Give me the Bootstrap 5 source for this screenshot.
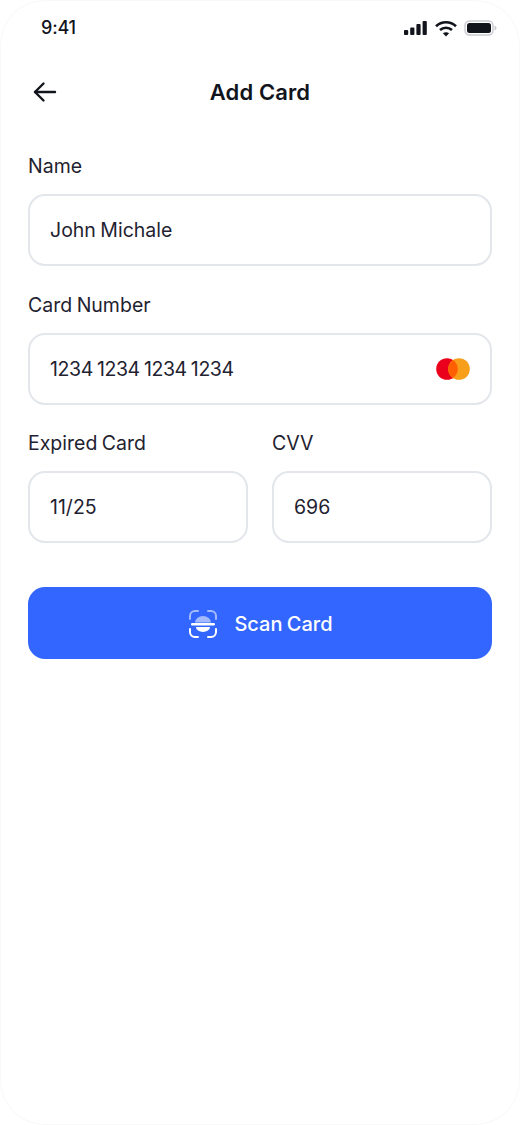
<!DOCTYPE html>
<html lang="en">
<head>
<meta charset="utf-8">
<title>Add Card</title>
<link rel="stylesheet" href="https://cdn.jsdelivr.net/npm/bootstrap@5.3.0/dist/css/bootstrap.min.css">
<style>
html,body{height:100%;background:#fff;}
body{font-family:Inter,"Liberation Sans",sans-serif;color:#1f2230;overflow:hidden;}
.phone-shell{width:520px;height:1125px;border:1px solid #f8f8f8;border-radius:45px;padding:0 27px;background:#fff;}
.status-row{height:54px;padding:0 0 0 13px;margin-right:-5px;}
.status-icons{gap:7px;}
.clock{font-size:18px;font-weight:500;line-height:1;letter-spacing:-.2px;color:#12141c;}
.top-row{height:73px;}
.back-slot{width:34px;margin-left:5px;}
.page-name{font-size:22px;font-weight:600;line-height:1;letter-spacing:.1px;color:#12141c;}
.form-area{padding-top:26px;}
.field-name{font-size:19.5px;font-weight:400;line-height:24px;margin:0 0 16px;word-spacing:-1px;}
.field-box.form-control{height:72px;border:2px solid #e3e6ea;border-radius:17px;padding:2px 20px 0 20px;font-size:19.5px;line-height:1;color:#1f2230;display:flex;align-items:center;justify-content:space-between;word-spacing:-1px;}
.digits{letter-spacing:-.4px;word-spacing:-1px;}
.field-gap-wide{margin-bottom:27px;}
.field-gap-narrow{margin-bottom:26px;}
.scan-btn.btn{height:72px;border:0;border-radius:17px;background:#3366ff;color:#fff;font-size:20px;font-weight:500;margin-top:44px;padding:1px 0 0 1px;word-spacing:-1px;}
.two-col{--bs-gutter-x:24px;}
</style>
</head>
<body>
<div class="phone-shell">
  <div class="status-row d-flex align-items-center justify-content-between">
    <span class="clock">9:41</span>
    <span class="status-icons d-flex align-items-center">
      <svg width="24" height="16" viewBox="0 0 24 16"><rect x="0" y="10" width="4.2" height="5" rx="1" fill="#12141c"/><rect x="6.2" y="7.5" width="4.2" height="7.5" rx="1" fill="#12141c"/><rect x="12.4" y="4" width="4.2" height="11" rx="1" fill="#12141c"/><rect x="18.6" y="1" width="4.2" height="14" rx="1" fill="#12141c"/></svg>
      <svg width="22" height="17" viewBox="0 0 22 17" fill="none" stroke="#12141c" stroke-width="2.6"><path d="M1 6.2C6.6 1 15.4 1 21 6.2"/><path d="M5 10C8.4 7 13.6 7 17 10"/><path d="M11 16.5 7.9 13.2C9.7 11.8 12.3 11.8 14.1 13.2Z" fill="#12141c" stroke="none"/></svg>
      <svg width="33" height="16" viewBox="0 0 33 16"><rect x="1" y="1" width="28" height="14" rx="4.5" fill="none" stroke="#c9cad0" stroke-width="1.4"/><rect x="3" y="3" width="24" height="10" rx="2.5" fill="#12141c"/><path d="M30.5 5.5c1.2.4 2 1.3 2 2.5s-.8 2.1-2 2.5Z" fill="#c9cad0"/></svg>
    </span>
  </div>
  <div class="top-row d-flex align-items-center">
    <span class="back-slot d-flex">
      <svg width="24" height="22" viewBox="0 0 24 22" fill="none" stroke="#12141c" stroke-width="2.4" stroke-linecap="round" stroke-linejoin="round"><path d="M22 11H2"/><path d="M10.5 2.5 2 11l8.5 8.500"/></svg>
    </span>
    <span class="page-name flex-grow-1 text-center">Add Card</span>
    <span class="back-slot"></span>
  </div>
  <div class="form-area">
    <p class="field-name">Name</p>
    <div class="field-box form-control field-gap-wide">John Michale</div>
    <p class="field-name">Card Number</p>
    <div class="field-box form-control field-gap-narrow">
      <span class="digits">1234 1234 1234 1234</span>
      <svg width="34" height="24" viewBox="0 0 34 24"><circle cx="11" cy="11" r="10.8" fill="#eb001b"/><circle cx="23" cy="11" r="10.8" fill="#f79e1b"/><path d="M17 2a10.8 10.8 0 0 1 0 18 10.8 10.8 0 0 1 0-18Z" fill="#ff5f00"/></svg>
    </div>
    <div class="row two-col">
      <div class="col-6">
        <p class="field-name">Expired Card</p>
        <div class="field-box form-control">11/25</div>
      </div>
      <div class="col-6">
        <p class="field-name">CVV</p>
        <div class="field-box form-control">696</div>
      </div>
    </div>
    <button type="button" class="scan-btn btn w-100 d-flex align-items-center justify-content-center gap-3">
      <svg width="30" height="30" viewBox="0 0 30 30" fill="none" stroke-linecap="round"><g stroke="#fff" stroke-width="2"><path d="M2 10V7a5 5 0 0 1 5-5h3" opacity=".55"/><path d="M20 2h3a5 5 0 0 1 5 5v3" opacity=".55"/><path d="M2 20v3a5 5 0 0 0 5 5h3"/><path d="M20 28h3a5 5 0 0 0 5-5v-3"/></g><path d="M7 13.500a8 6.500 0 0 1 16 0Z" fill="#fff" opacity=".55"/><rect x="3" y="14" width="24" height="2.400" rx="1.200" fill="#fff"/><path d="M8 18h14a7 5 0 0 1-7 5 7 5 0 0 1-7-5Z" fill="#fff"/></svg>
      <span>Scan Card</span>
    </button>
  </div>
</div>
<script src="https://cdn.jsdelivr.net/npm/bootstrap@5.3.0/dist/js/bootstrap.bundle.min.js"></script>
</body>
</html>
